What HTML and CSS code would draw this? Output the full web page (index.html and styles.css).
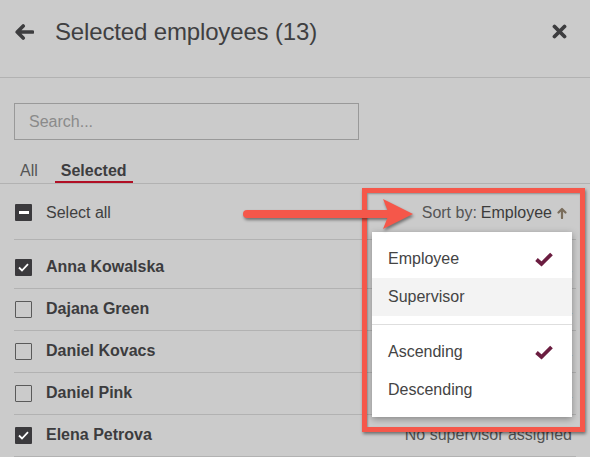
FILE: index.html
```html
<!DOCTYPE html>
<html lang="en">
<head>
<meta charset="utf-8">
<title>Selected employees</title>
<link rel="stylesheet" href="styles.css">
</head>
<body>
<div class="panel">
  <header class="header">
    <svg class="icon-back" width="19" height="16" viewBox="0 0 19 16" aria-hidden="true">
      <path d="M8.2 2 L2.2 8 L8.2 14 M2.6 8 H17.5" fill="none" stroke="#3d3d3f" stroke-width="3.6" stroke-linecap="round" stroke-linejoin="round"/>
    </svg>
    <h1 class="title">Selected employees (13)</h1>
    <svg class="icon-close" width="15" height="15" viewBox="0 0 15 15" aria-hidden="true">
      <path d="M2.5 2.5 L12.5 12.5 M12.5 2.5 L2.5 12.5" fill="none" stroke="#3d3d3f" stroke-width="3.8" stroke-linecap="round"/>
    </svg>
  </header>

  <div class="search"><input class="search-input" type="text" placeholder="Search..."></div>

  <nav class="tabs">
    <span class="tab">All</span>
    <span class="tab tab-active">Selected</span>
  </nav>

  <div class="toolbar">
    <div class="check-item">
      <span class="cb cb-ind"><span class="cb-bar"></span></span>
      <span class="select-all">Select all</span>
    </div>
    <div class="sort">
      <span class="sort-label">Sort by:</span>
      <span class="sort-value">Employee</span>
      <svg class="sort-icon" width="10" height="12" viewBox="0 0 10 12" aria-hidden="true">
        <path d="M5 11 V2.5 M1.5 5.5 L5 2 L8.5 5.5" fill="none" stroke="#7a6d5c" stroke-width="2.2" stroke-linecap="round" stroke-linejoin="round"/>
      </svg>
    </div>
  </div>

  <ul class="list">
    <li class="row">
      <span class="cb cb-on"><svg width="13" height="11" viewBox="0 0 13 11"><path d="M2 5.5 L5 8.5 L11 2.2" fill="none" stroke="#fff" stroke-width="1.8"/></svg></span>
      <span class="name">Anna Kowalska</span>
      <span class="sup">Daniel Pink</span>
    </li>
    <li class="row">
      <span class="cb cb-off"></span>
      <span class="name">Dajana Green</span>
      <span class="sup">Anna Kowalska</span>
    </li>
    <li class="row">
      <span class="cb cb-off"></span>
      <span class="name">Daniel Kovacs</span>
      <span class="sup">Anna Kowalska</span>
    </li>
    <li class="row">
      <span class="cb cb-off"></span>
      <span class="name">Daniel Pink</span>
      <span class="sup">Elena Petrova</span>
    </li>
    <li class="row">
      <span class="cb cb-on"><svg width="13" height="11" viewBox="0 0 13 11"><path d="M2 5.5 L5 8.5 L11 2.2" fill="none" stroke="#fff" stroke-width="1.8"/></svg></span>
      <span class="name">Elena Petrova</span>
      <span class="sup">No supervisor assigned</span>
    </li>
  </ul>

  <div class="menu">
    <div class="menu-item">Employee
      <svg class="menu-check" width="18" height="15" viewBox="0 0 18 15"><path d="M1.5 7.5 L6.5 12 L16.5 2" fill="none" stroke="#6b1d40" stroke-width="3.8" stroke-linejoin="miter"/></svg>
    </div>
    <div class="menu-item menu-item-hover">Supervisor</div>
    <div class="menu-divider"></div>
    <div class="menu-item">Ascending
      <svg class="menu-check" width="18" height="15" viewBox="0 0 18 15"><path d="M1.5 7.5 L6.5 12 L16.5 2" fill="none" stroke="#6b1d40" stroke-width="3.8" stroke-linejoin="miter"/></svg>
    </div>
    <div class="menu-item">Descending</div>
  </div>

  <div class="highlight-box"></div>

  <svg class="callout-arrow" width="590" height="457" viewBox="0 0 590 457" aria-hidden="true">
    <line x1="247" y1="214" x2="392" y2="214" stroke="#f5574a" stroke-width="8" stroke-linecap="round"/>
    <path d="M383 199 L413 214 L383 229 L389 214 Z" fill="#f5574a"/>
  </svg>
</div>
</body>
</html>
```

FILE: styles.css
```css
* { box-sizing: border-box; }

html, body {
  margin: 0;
  padding: 0;
  background: #cbcbcb;
}

body {
  font-family: "Liberation Sans", Arial, sans-serif;
  color: #3d3d3d;
}

.panel {
  position: relative;
  width: 590px;
  height: 457px;
  overflow: hidden;
  background: #cbcbcb;
}

/* Header */
.header {
  display: flex;
  align-items: center;
  height: 78px;
  padding: 0 23px 14px 15px;
  border-bottom: 1px solid #b2b2b2;
}

.icon-back {
  flex: none;
  margin-right: 21px;
}

.title {
  margin: 0;
  flex: 1;
  font-size: 24px;
  font-weight: normal;
  letter-spacing: -0.15px;
  line-height: 30px;
  color: #3f3f41;
}

.icon-close {
  flex: none;
}

/* Search */
.search {
  padding: 25px 0 0 14px;
}

.search-input {
  display: block;
  width: 345px;
  height: 37px;
  margin: 0;
  padding: 0 14px;
  border: 1px solid #999;
  border-radius: 0;
  background: transparent;
  font-family: "Liberation Sans", Arial, sans-serif;
  font-size: 16px;
  color: #444;
  outline: none;
}

.search-input::placeholder {
  color: #8a8a8a;
}

/* Tabs */
.tabs {
  display: flex;
  gap: 11px;
  margin-top: 21px;
  padding-left: 14px;
  border-bottom: 1px solid #b2b2b2;
}

.tab {
  padding: 0 6px;
  font-size: 16px;
  line-height: 20px;
  border-bottom: 2px solid transparent;
  color: #555;
}

.tab-active {
  font-weight: bold;
  color: #3d3d3f;
  border-bottom-color: #b10f25;
}

/* Toolbar */
.toolbar {
  display: flex;
  align-items: center;
  justify-content: space-between;
  height: 56px;
  margin: 0 14px;
  padding: 2px 9px 0 1px;
  border-bottom: 1px solid #b2b2b2;
}

.check-item {
  display: flex;
  align-items: center;
  gap: 14px;
}

.select-all {
  font-size: 16px;
  color: #3f3f3f;
}

.sort {
  display: flex;
  align-items: center;
  font-size: 16px;
}

.sort-label {
  color: #555;
  margin-right: 4px;
}

.sort-value {
  color: #3b3b3b;
}

.sort-icon {
  margin-left: 5px;
}

/* Checkboxes */
.cb {
  flex: none;
  display: inline-flex;
  align-items: center;
  justify-content: center;
  width: 17px;
  height: 17px;
  border-radius: 1px;
}

.cb-on,
.cb-ind {
  background: #3b3a3d;
}

.cb-off {
  border: 1.5px solid #5a5a5a;
}

.cb-bar {
  width: 10px;
  height: 3px;
  background: #fff;
}

/* List */
.list {
  list-style: none;
  margin: 0 14px;
  padding: 7px 0 0;
}

.row {
  display: flex;
  align-items: center;
  gap: 14px;
  height: 42px;
  padding: 0 4px 1px 1px;
  border-bottom: 1px solid #b2b2b2;
}

.name {
  font-size: 16px;
  font-weight: bold;
  color: #3c3c3e;
}

.sup {
  margin-left: auto;
  font-size: 16px;
  color: #555;
}

/* Sort menu (overlay) */
.menu {
  position: absolute;
  left: 372px;
  top: 232px;
  width: 200px;
  padding: 8px 0;
  background: #fff;
  box-shadow: 0 2px 7px rgba(0, 0, 0, 0.35);
}

.menu-item {
  display: flex;
  align-items: center;
  justify-content: space-between;
  height: 38px;
  padding: 0 19px 0 16px;
  font-size: 16px;
  color: #444;
}

.menu-item-hover {
  background: #f3f3f3;
}

.menu-divider {
  height: 1px;
  margin: 8px 0;
  background: #dedede;
}

/* Annotation overlays */
.highlight-box {
  position: absolute;
  left: 362px;
  top: 188px;
  width: 223px;
  height: 244px;
  border: 5px solid #f5574a;
  box-shadow: 1px 2px 3px rgba(0, 0, 0, 0.45), inset 1px 1px 2px rgba(0, 0, 0, 0.3);
}

.callout-arrow {
  position: absolute;
  left: 0;
  top: 0;
  pointer-events: none;
  filter: drop-shadow(1px 2px 1.5px rgba(0, 0, 0, 0.45));
}
```
